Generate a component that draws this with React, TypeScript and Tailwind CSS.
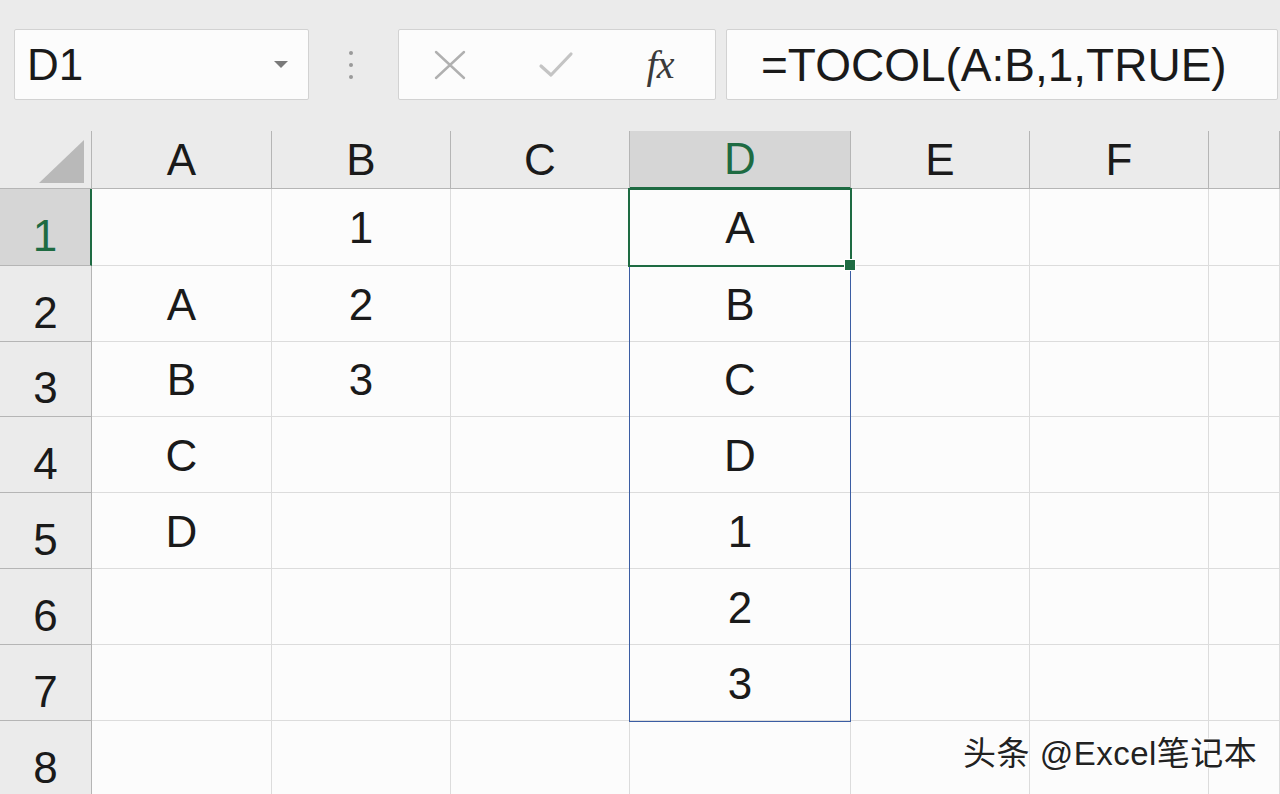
import React from 'react';

const cols = ['A', 'B', 'C', 'D', 'E', 'F', ''];
const rowHeights = ['h-[77px]', 'h-[76px]', 'h-[75px]', 'h-[76px]', 'h-[76px]', 'h-[76px]', 'h-[76px]', 'h-[76px]'];

const data: Record<string, string> = {
  B1: '1',
  D1: 'A',
  A2: 'A',
  B2: '2',
  D2: 'B',
  A3: 'B',
  B3: '3',
  D3: 'C',
  A4: 'C',
  D4: 'D',
  A5: 'D',
  D5: '1',
  D6: '2',
  D7: '3',
};

function CloseIcon() {
  return (
    <svg width="34" height="30" viewBox="0 0 34 30" fill="none">
      <path d="M3 2 L31 28 M31 2 L3 28" stroke="#b0b0b0" strokeWidth="2.4" strokeLinecap="round" />
    </svg>
  );
}

function CheckIcon() {
  return (
    <svg width="36" height="30" viewBox="0 0 36 30" fill="none">
      <path d="M3 16 L13 25 L33 4" stroke="#c4c4c4" strokeWidth="3.2" strokeLinecap="round" strokeLinejoin="round" />
    </svg>
  );
}

function SelectAll() {
  return (
    <svg width="46" height="44" viewBox="0 0 46 44">
      <polygon points="0,43 45,0 45,43" fill="#b9b9b9" />
    </svg>
  );
}

export default function App() {
  return (
    <div className="relative w-[1280px] h-[794px] overflow-hidden bg-[#ebebeb] font-['Liberation_Sans',Arial,sans-serif] text-[#1a1a1a]">
      {/* Formula bar */}
      <div className="h-[131px] flex items-start pt-[29px] pl-[14px]">
        <div className="w-[295px] h-[71px] bg-[#fcfcfc] border border-[#d2d2d2] rounded-[2px] flex items-center justify-between pl-[12px] pr-[20px]">
          <span className="text-[44px] leading-none">D1</span>
          <svg width="14" height="8" viewBox="0 0 14 8">
            <polygon points="0,0 14,0 7,7" fill="#7a7a7a" />
          </svg>
        </div>
        <div className="w-[89px] h-[71px] flex flex-col items-center justify-center gap-[8px] pr-[6px]">
          <span className="w-[4px] h-[4px] rounded-full bg-[#9a9a9a]" />
          <span className="w-[4px] h-[4px] rounded-full bg-[#9a9a9a]" />
          <span className="w-[4px] h-[4px] rounded-full bg-[#9a9a9a]" />
        </div>
        <div className="w-[318px] h-[71px] bg-[#fcfcfc] border border-[#d2d2d2] rounded-[2px] flex items-center">
          <div className="w-[31px]" />
          <div className="w-[40px] flex justify-center">
            <CloseIcon />
          </div>
          <div className="w-[66px]" />
          <div className="w-[40px] flex justify-center">
            <CheckIcon />
          </div>
          <div className="w-[64px]" />
          <div className="w-[40px] flex justify-center">
            <span className="font-['Liberation_Serif',serif] italic text-[40px] leading-none text-[#3a3a3a] tracking-[-1px]">fx</span>
          </div>
        </div>
        <div className="ml-[10px] mr-[2px] flex-1 h-[71px] bg-[#fcfcfc] border border-[#d2d2d2] rounded-[2px] flex items-center pl-[34px]">
          <span className="text-[46px] leading-none">=TOCOL(A:B,1,TRUE)</span>
        </div>
      </div>

      {/* Grid */}
      <div className="relative">
        <div className="grid grid-cols-[92px_180px_179px_179px_221px_179px_179px_71px]">
          <div className="h-[58px] border-r border-b border-[#b5b5b5] flex items-start justify-end pt-[9px] pr-[6px]">
            <SelectAll />
          </div>
          {cols.map((c, i) => (
            <div
              key={c + i}
              className={
                c === 'D'
                  ? 'h-[58px] bg-[#d6d6d6] border-r border-[#b5b5b5] border-b-2 border-b-[#1e6b42] flex items-center justify-center text-[44px] leading-none text-[#1e6b42]'
                  : 'h-[58px] border-r border-b border-[#b5b5b5] flex items-center justify-center text-[44px] leading-none'
              }
            >
              {c}
            </div>
          ))}

          {rowHeights.map((h, r) => {
            const row = r + 1;
            return (
              <React.Fragment key={row}>
                <div
                  className={
                    row === 1
                      ? `${h} bg-[#d6d6d6] border-r-2 border-r-[#1e6b42] border-b border-b-[#b5b5b5] flex items-center justify-center pt-[18px] text-[44px] leading-none text-[#1e6b42]`
                      : `${h} border-r border-b border-[#b5b5b5] flex items-center justify-center pt-[18px] text-[44px] leading-none`
                  }
                >
                  {row}
                </div>
                {cols.map((c, i) => (
                  <div
                    key={`${c}${i}-${row}`}
                    className={`${h} bg-[#fcfcfc] border-r border-b border-[#dcdcdc] flex items-center justify-center pt-[2px] text-[44px] leading-none`}
                  >
                    {c ? data[`${c}${row}`] ?? '' : ''}
                  </div>
                ))}
              </React.Fragment>
            );
          })}
        </div>

        {/* Spill range */}
        <div className="absolute left-[629px] top-[135px] w-[222px] h-[456px] border-[1.5px] border-[#3b5da3] pointer-events-none" />
        {/* Active cell */}
        <div className="absolute left-[628px] top-[57px] w-[224px] h-[79px] border-2 border-[#1e6b42] pointer-events-none" />
        <div className="absolute left-[845px] top-[129px] w-[10px] h-[10px] bg-[#1e6b42] outline outline-1 outline-white" />

        {/* Watermark */}
        <div className="absolute left-[963px] top-[606px] text-[33px] tracking-[0.5px] leading-none text-[#222] font-['Liberation_Sans','Noto_Sans_CJK_SC',sans-serif] [text-shadow:0_0_2px_#fff,1px_1px_0_#fff,-1px_-1px_0_#fff]">
          头条 @Excel笔记本
        </div>
      </div>
    </div>
  );
}
